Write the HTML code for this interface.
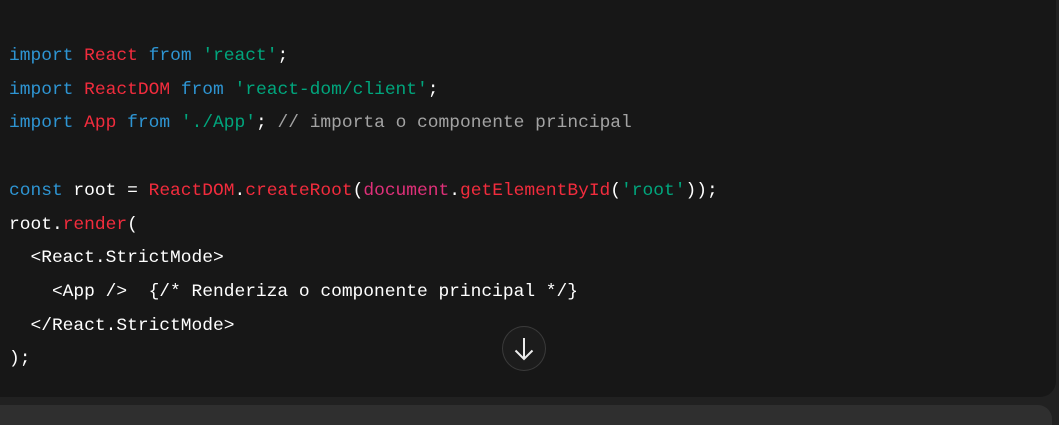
<!DOCTYPE html>
<html><head><meta charset="utf-8"><style>
html,body{margin:0;padding:0;width:1059px;height:412px;overflow:hidden;background:#212121;}
.block{position:absolute;left:0;top:0;width:1056px;height:397px;background:#171717;border-bottom-right-radius:16px;}
pre{position:absolute;left:9px;top:40px;margin:0;font-family:"Liberation Mono",monospace;font-size:17.9px;line-height:33.7px;color:#fff;}
.k{color:#2e95d3}.r{color:#f22c3d}.s{color:#00a67d}.c{color:#a3a3a3}.p{color:#df3079}
.btn{position:absolute;left:502px;top:326px;width:44px;height:45px;border-radius:50%;border:1px solid #3a3a3a;background:#1c1c1c;box-sizing:border-box;}
.btn svg{position:absolute;left:-1px;top:-1px;}
.inp{position:absolute;left:0;top:405px;width:1052px;height:20px;background:#2f2f2f;border-top-right-radius:14px;}
</style></head><body>
<div class="block">
<pre><span class="k">import</span> <span class="r">React</span> <span class="k">from</span> <span class="s">'react'</span>;
<span class="k">import</span> <span class="r">ReactDOM</span> <span class="k">from</span> <span class="s">'react-dom/client'</span>;
<span class="k">import</span> <span class="r">App</span> <span class="k">from</span> <span class="s">'./App'</span>; <span class="c">// importa o componente principal</span>

<span class="k">const</span> root = <span class="r">ReactDOM</span>.<span class="r">createRoot</span>(<span class="p">document</span>.<span class="r">getElementById</span>(<span class="s">'root'</span>));
root.<span class="r">render</span>(
  &lt;React.StrictMode&gt;
    &lt;App /&gt;  {/* Renderiza o componente principal */}
  &lt;/React.StrictMode&gt;
);</pre>
<div class="btn"><svg width="44" height="45" viewBox="0 0 44 45"><path d="M22 12V33M13.5 24.5L22 33L30.5 24.5" stroke="#ececec" stroke-width="2" fill="none"/></svg></div>
</div>
<div class="inp"></div>
</body></html>
